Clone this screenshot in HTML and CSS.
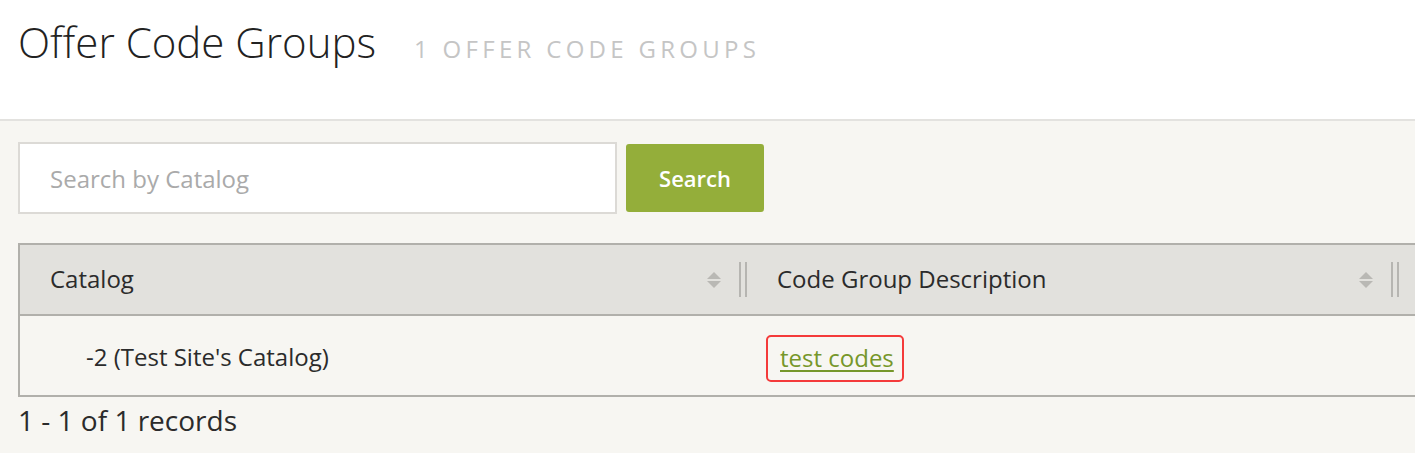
FILE: index.html
```html
<!DOCTYPE html>
<html lang="en">
<head>
<meta charset="utf-8">
<title>Offer Code Groups</title>
<link rel="stylesheet" href="styles.css">
</head>
<body>
<header class="page-header">
  <h1 class="page-title">Offer Code Groups</h1>
  <span class="page-count">1 Offer Code Groups</span>
</header>
<main class="content">
  <form class="search-bar" onsubmit="return false">
    <input class="search-input" type="text" placeholder="Search by Catalog">
    <button class="search-btn" type="submit">Search</button>
  </form>
  <div class="grid">
    <div class="grid-head">
      <div class="th col-catalog">
        <span class="th-label">Catalog</span>
        <span class="sort"><i class="up"></i><i class="down"></i></span>
        <span class="resizer"></span>
      </div>
      <div class="th col-desc">
        <span class="th-label">Code Group Description</span>
        <span class="sort"><i class="up"></i><i class="down"></i></span>
        <span class="resizer"></span>
      </div>
      <div class="th col-rest"></div>
    </div>
    <div class="grid-row">
      <div class="td col-catalog td-catalog">-2 (Test Site's Catalog)</div>
      <div class="td col-desc td-desc"><span class="highlight"><a class="link" href="#">test codes</a></span></div>
      <div class="td col-rest"></div>
    </div>
  </div>
  <div class="records">1 - 1 of 1 records</div>
</main>
</body>
</html>
```
FILE: styles.css
```css
html, body {
  margin: 0;
  padding: 0;
}
body {
  background: #f7f6f2;
  font-family: "Open Sans", "Liberation Sans", sans-serif;
  color: #333;
  overflow: hidden;
}
.page-header {
  background: #fff;
  height: 121px;
  border-bottom: 2px solid #e3e2df;
  display: flex;
  align-items: baseline;
  padding-left: 18px;
  box-sizing: border-box;
}
.page-title {
  margin: 0;
  font-weight: 300;
  font-size: 42px;
  line-height: 1;
  color: #222;
  padding-top: 21px;
}
.page-count {
  margin-left: 38px;
  text-transform: uppercase;
  font-size: 24px;
  letter-spacing: 4.3px;
  color: #c5c5c5;
  font-weight: 400;
}
.content {
  padding: 21px 0 0 18px;
}
.search-bar {
  display: flex;
  align-items: center;
  gap: 9px;
  margin: 0;
}
.search-input {
  width: 599px;
  height: 72px;
  box-sizing: border-box;
  border: 2px solid #dcdad6;
  background: #fff;
  padding: 0 30px;
  font-family: inherit;
  font-size: 24px;
  color: #333;
  outline: none;
}
.search-input::placeholder {
  color: #aaa;
}
.search-btn {
  width: 138px;
  height: 68px;
  border: none;
  border-radius: 3px;
  background: #94ae3a;
  color: #fff;
  font-family: inherit;
  font-size: 22px;
  font-weight: 600;
  cursor: pointer;
}
.grid {
  margin-top: 29px;
  width: 1440px;
  border: 2px solid #b1b0ab;
  border-right: none;
}
.grid-head, .grid-row {
  display: flex;
}
.grid-head {
  background: #e2e1dd;
  height: 69px;
  border-bottom: 2px solid #b1b0ab;
}
.grid-row {
  height: 79px;
}
.col-catalog { width: 727px; }
.col-desc { width: 652px; }
.col-rest { flex: 1; }
.th {
  display: flex;
  align-items: center;
  box-sizing: border-box;
  padding-left: 30px;
  padding-bottom: 3px;
  font-size: 24px;
  color: #2b2b2b;
}
.th-label { flex: 1; }
.sort {
  display: flex;
  flex-direction: column;
  gap: 2px;
  margin-right: 18px;
  margin-top: 3px;
}
.sort i {
  display: block;
  width: 0;
  height: 0;
  border-left: 7px solid transparent;
  border-right: 7px solid transparent;
}
.sort .up { border-bottom: 7px solid #b9b8b4; }
.sort .down { border-top: 7px solid #b9b8b4; }
.resizer {
  width: 8px;
  height: 35px;
  margin-top: 3px;
  box-sizing: border-box;
  border-left: 2px solid #b6b5b1;
  border-right: 2px solid #b6b5b1;
}
.td {
  display: flex;
  align-items: center;
  box-sizing: border-box;
  font-size: 24px;
  color: #2b2b2b;
  padding-top: 2px;
}
.td-catalog { padding-left: 66px; }
.td-desc { padding-left: 19px; padding-top: 5px; }
.highlight {
  display: inline-block;
  border: 2px solid #f43a3a;
  border-radius: 5px;
  padding: 4px 8px 6px 12px;
}
.link {
  color: #76972a;
  text-decoration: underline;
  text-underline-offset: 3px;
}
.records {
  margin-top: 4px;
  font-size: 28px;
  color: #2b2b2b;
}
```
